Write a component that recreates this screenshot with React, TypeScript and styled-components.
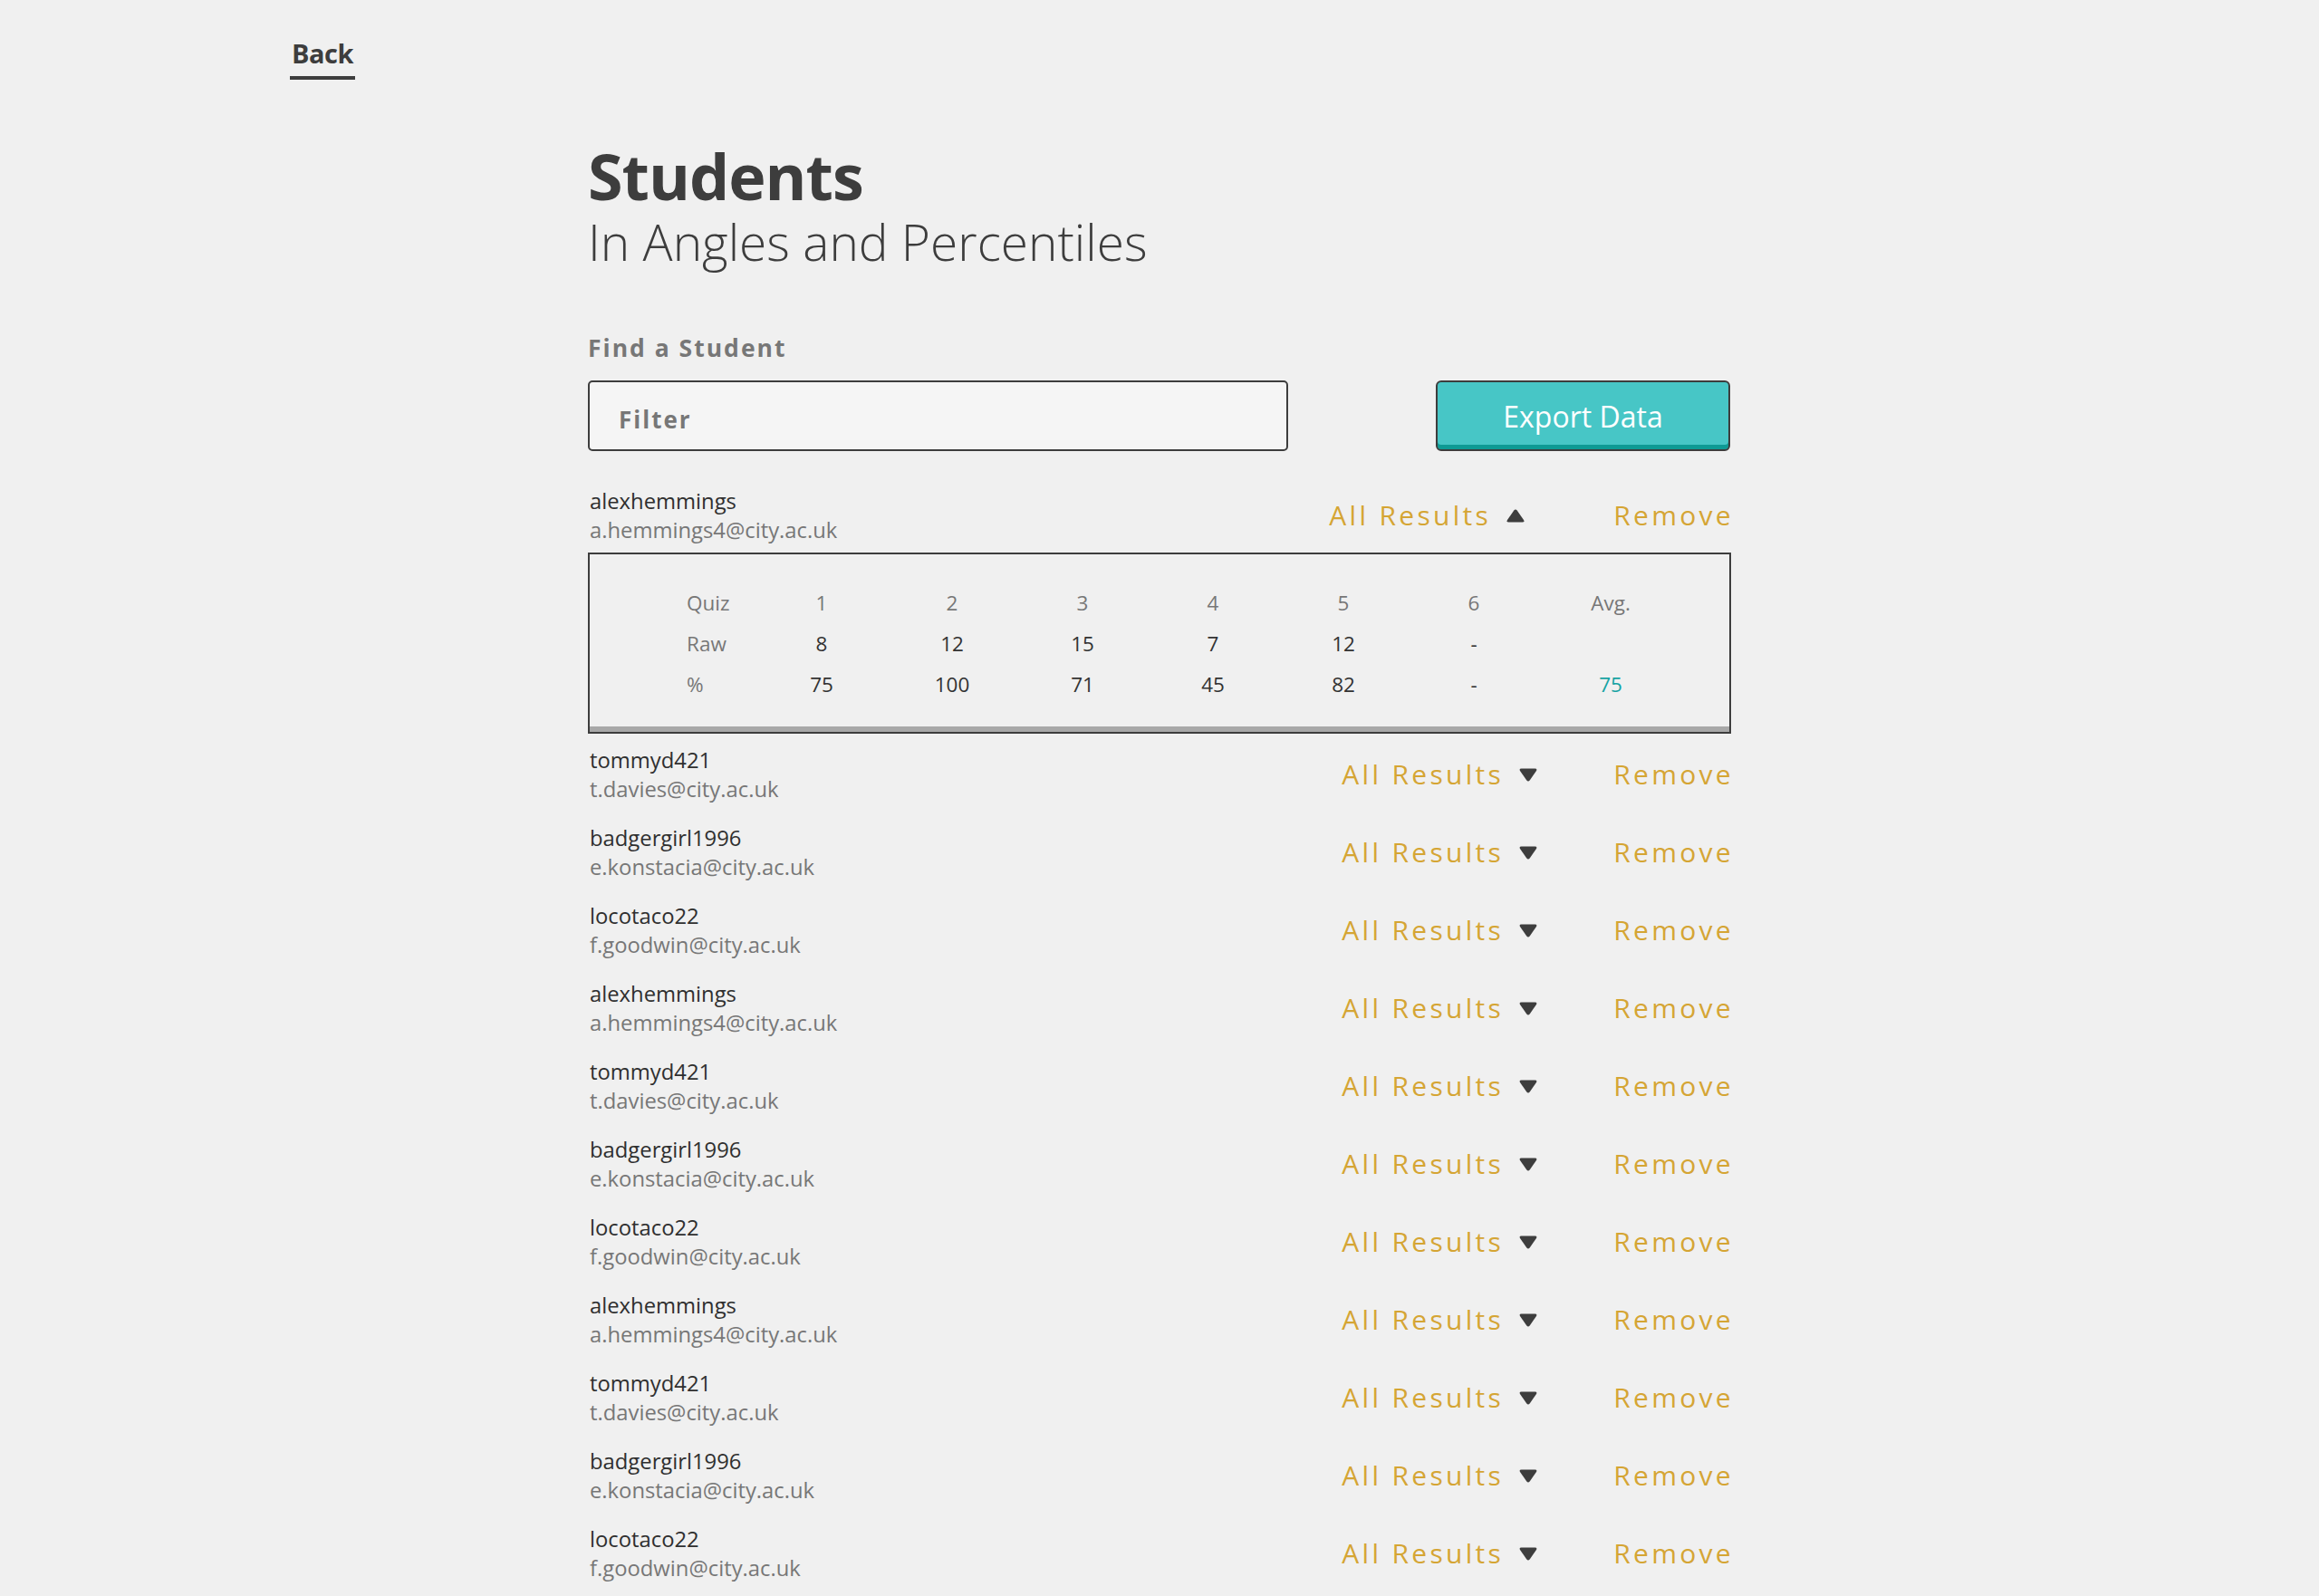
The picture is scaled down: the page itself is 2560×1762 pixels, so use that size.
import React from "react";
import styled, { createGlobalStyle } from "styled-components";

const GlobalStyle = createGlobalStyle`
  html, body {
    margin: 0;
    padding: 0;
    background: #f0f0f0;
    font-family: "Open Sans", "Noto Sans", Arial, sans-serif;
    color: #3d3d3d;
  }
  * { box-sizing: border-box; }
`;

const Page = styled.div`
  min-height: 100vh;
  background: #f0f0f0;
`;

const TopBar = styled.header`
  padding: 41px 0 0 320px;
  height: 88px;
`;

const BackLink = styled.a`
  display: inline-block;
  font-size: 29px;
  line-height: 36px;
  font-weight: 700;
  color: #3d3d3d;
  text-decoration: none;
  padding: 0 2px 7px;
  border-bottom: 4px solid #3d3d3d;
  letter-spacing: -0.5px;
  cursor: pointer;
`;

const Main = styled.main`
  width: 1262px;
  margin: 66px auto 0;
`;

const Title = styled.h1`
  margin: 0;
  font-size: 70px;
  line-height: 80px;
  font-weight: 700;
  letter-spacing: -1px;
  color: #3d3d3d;
`;

const Subtitle = styled.h2`
  margin: 1px 0 0;
  font-size: 55px;
  line-height: 64px;
  font-weight: 300;
  color: #3d3d3d;
`;

const Label = styled.label`
  display: block;
  margin-top: 69px;
  font-size: 26.5px;
  line-height: 32px;
  font-weight: 700;
  letter-spacing: 2px;
  color: #777777;
`;

const Toolbar = styled.div`
  margin-top: 20px;
  display: flex;
  justify-content: space-between;
  align-items: stretch;
  height: 78px;
`;

const FilterInput = styled.input`
  width: 773px;
  height: 78px;
  border: 2px solid #3d3d3d;
  border-radius: 5px;
  background: #f5f5f5;
  padding: 8px 0 0 32px;
  font-family: inherit;
  font-size: 26px;
  font-weight: 700;
  letter-spacing: 2px;
  color: #3d3d3d;
  outline: none;
  &::placeholder {
    color: #777777;
    opacity: 1;
  }
`;

const ExportButton = styled.button`
  width: 325px;
  height: 78px;
  margin-right: 1px;
  border: 2px solid #3d3d3d;
  border-radius: 6px;
  background: #47c6c6;
  box-shadow: inset 0 -5px 0 #0e9a94;
  color: #ffffff;
  font-family: inherit;
  font-size: 32px;
  font-weight: 500;
  padding: 0;
  cursor: pointer;
`;

const List = styled.div`
  margin-top: 26px;
  display: flex;
  flex-direction: column;
`;

const Row = styled.div`
  display: flex;
  justify-content: space-between;
  align-items: center;
  height: 86px;
  padding: 13px 0 9px;
`;

const Info = styled.div`
  display: flex;
  flex-direction: column;
  padding-left: 2px;
`;

const Username = styled.span`
  font-size: 23.8px;
  line-height: 32px;
  color: #2f2f2f;
`;

const Email = styled.span`
  font-size: 23.8px;
  line-height: 32px;
  color: #777777;
`;

const Actions = styled.div`
  display: flex;
  align-items: center;
  margin-right: -3px;
`;

const ResultsToggle = styled.button<{ $open: boolean }>`
  display: flex;
  align-items: center;
  gap: 17px;
  border: none;
  background: none;
  padding: 0;
  margin-right: ${(p) => (p.$open ? "98px" : "84px")};
  font-family: inherit;
  font-size: 30px;
  font-weight: 500;
  line-height: 40px;
  letter-spacing: 3.3px;
  color: #d5a534;
  cursor: pointer;
`;

const RemoveButton = styled.button`
  border: none;
  background: none;
  padding: 0;
  font-family: inherit;
  font-size: 30px;
  font-weight: 500;
  line-height: 40px;
  letter-spacing: 3.3px;
  color: #d5a534;
  cursor: pointer;
`;

const ResultsBox = styled.div`
  border: 2px solid #3d3d3d;
  box-shadow: inset 0 -6px 0 #a8a8a8;
  height: 200px;
  padding: 31px 0 0 107px;
`;

const ResultsGrid = styled.div`
  display: grid;
  grid-template-columns: 77px repeat(6, 144px) 158px;
  grid-auto-rows: 45px;
  font-size: 22.5px;
  line-height: 45px;
`;

const Cell = styled.div<{ $tone: "label" | "value" | "accent"; $align?: "left" | "center" }>`
  text-align: ${(p) => p.$align ?? "center"};
  color: ${(p) =>
    p.$tone === "label" ? "#777777" : p.$tone === "accent" ? "#17a3a3" : "#333333"};
`;

const Triangle: React.FC<{ up: boolean }> = ({ up }) => (
  <svg width="20" height="15" viewBox="0 0 20 15" aria-hidden="true">
    <path
      d={
        up
          ? "M8.3 1.6 Q10 -0.6 11.7 1.6 L19 12 Q20.3 14.5 17.5 14.5 L2.5 14.5 Q-0.3 14.5 1 12 Z"
          : "M8.3 13.4 Q10 15.6 11.7 13.4 L19 3 Q20.3 0.5 17.5 0.5 L2.5 0.5 Q-0.3 0.5 1 3 Z"
      }
      fill="#3d3d3d"
    />
  </svg>
);

type Student = { user: string; email: string };

const base: Student[] = [
  { user: "alexhemmings", email: "a.hemmings4@city.ac.uk" },
  { user: "tommyd421", email: "t.davies@city.ac.uk" },
  { user: "badgergirl1996", email: "e.konstacia@city.ac.uk" },
  { user: "locotaco22", email: "f.goodwin@city.ac.uk" },
];

const students: Student[] = [...base, ...base, ...base];

const header = ["1", "2", "3", "4", "5", "6", "Avg."];
const raw = ["8", "12", "15", "7", "12", "-", ""];
const pct = ["75", "100", "71", "45", "82", "-", "75"];

const Results: React.FC = () => (
  <ResultsBox>
    <ResultsGrid>
      <Cell $tone="label" $align="left">Quiz</Cell>
      {header.map((h, i) => (
        <Cell key={"h" + i} $tone="label">{h}</Cell>
      ))}
      <Cell $tone="label" $align="left">Raw</Cell>
      {raw.map((v, i) => (
        <Cell key={"r" + i} $tone="value">{v}</Cell>
      ))}
      <Cell $tone="label" $align="left">%</Cell>
      {pct.map((v, i) => (
        <Cell key={"p" + i} $tone={i === 6 ? "accent" : "value"}>{v}</Cell>
      ))}
    </ResultsGrid>
  </ResultsBox>
);

export default function App() {
  return (
    <Page>
      <GlobalStyle />
      <TopBar>
        <BackLink>Back</BackLink>
      </TopBar>
      <Main>
        <Title>Students</Title>
        <Subtitle>In Angles and Percentiles</Subtitle>
        <Label htmlFor="filter">Find a Student</Label>
        <Toolbar>
          <FilterInput id="filter" placeholder="Filter" />
          <ExportButton>Export Data</ExportButton>
        </Toolbar>
        <List>
          {students.map((s, i) => {
            const open = i === 0;
            return (
              <React.Fragment key={i}>
                <Row>
                  <Info>
                    <Username>{s.user}</Username>
                    <Email>{s.email}</Email>
                  </Info>
                  <Actions>
                    <ResultsToggle $open={open}>
                      All Results
                      <Triangle up={open} />
                    </ResultsToggle>
                    <RemoveButton>Remove</RemoveButton>
                  </Actions>
                </Row>
                {open && <Results />}
              </React.Fragment>
            );
          })}
        </List>
      </Main>
    </Page>
  );
}
